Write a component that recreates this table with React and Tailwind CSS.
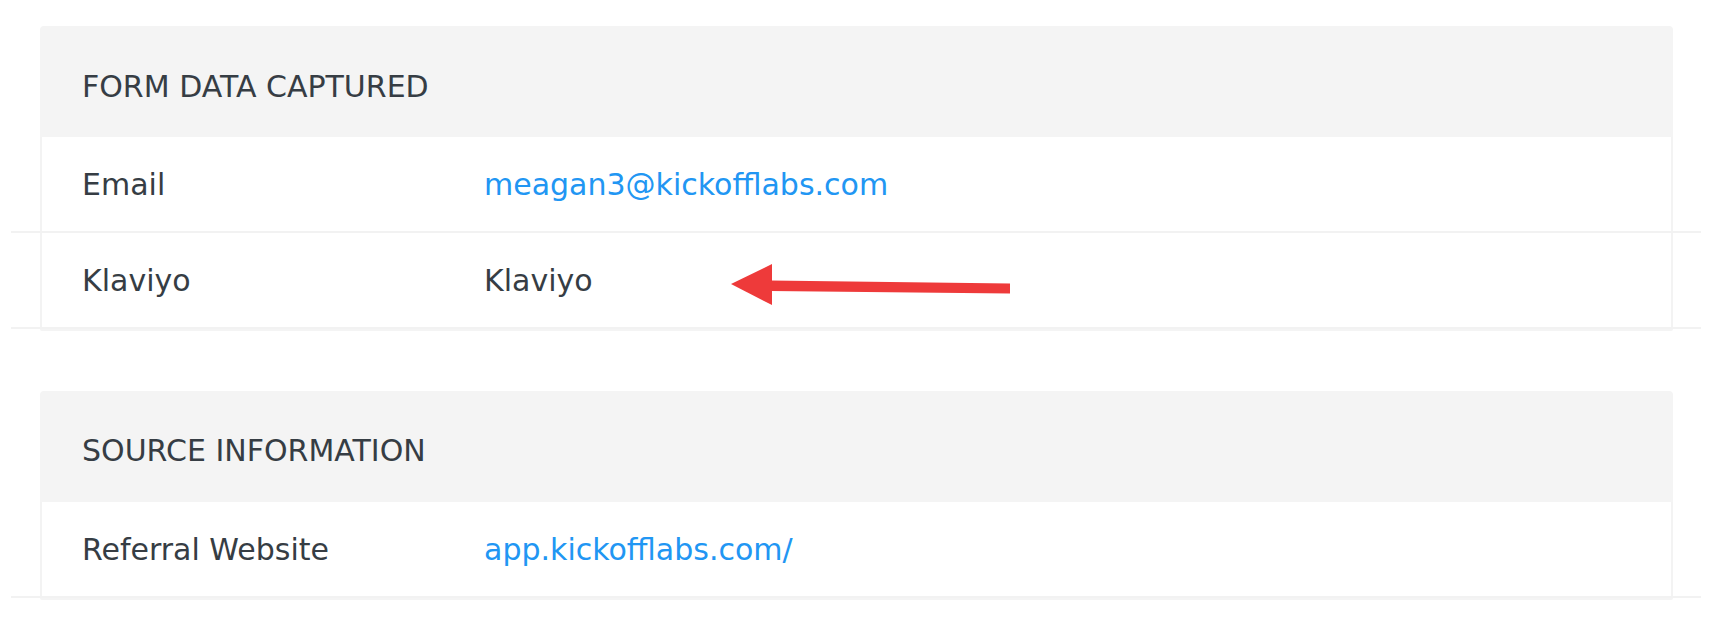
import React from 'react';

const sections = [
  {
    title: 'FORM DATA CAPTURED',
    headerPad: 'pt-[10px]',
    rows: [
      { label: 'Email', value: 'meagan3@kickofflabs.com', link: true },
      { label: 'Klaviyo', value: 'Klaviyo' },
    ],
  },
  {
    title: 'SOURCE INFORMATION',
    headerPad: 'pt-[8px]',
    rows: [{ label: 'Referral Website', value: 'app.kickofflabs.com/', link: true }],
  },
];

function Section({ title, headerPad, rows }) {
  return (
    <div className="ml-[40px] w-[1633px]">
      {/* Header */}
      <div className={`flex h-[111px] items-center rounded-t-[4px] bg-[#f4f4f4] pl-[42px] ${headerPad}`}>
        <span>{title}</span>
      </div>

      {/* Rows */}
      <div className="border-x-2 border-[#f3f3f3]">
        {rows.map((row) => (
          <div key={row.label}>
            <div className="flex h-[94px] items-center pl-[40px]">
              <div className="w-[402px]">{row.label}</div>
              {row.link ? (
                <a href="#" className="text-[#2196f3]">
                  {row.value}
                </a>
              ) : (
                <div>{row.value}</div>
              )}
            </div>
            <div className="-ml-[31px] -mr-[30px] h-[2px] bg-[#f2f2f2]" />
          </div>
        ))}
      </div>
      <div className="h-[2px] rounded-b-[3px] bg-[#f4f4f4]" />
    </div>
  );
}

export default function App() {
  return (
    <div
      className="relative h-[642px] w-[1726px] overflow-hidden bg-white pt-[26px] text-[30px] text-[#363d44]"
      style={{ fontFamily: '"DejaVu Sans", Verdana, sans-serif' }}
    >
      <div className="flex flex-col gap-[60px]">
        {sections.map((s) => (
          <Section key={s.title} {...s} />
        ))}
      </div>

      {/* Red annotation arrow */}
      <svg
        className="pointer-events-none absolute left-0 top-0"
        width="1726"
        height="642"
        viewBox="0 0 1726 642"
      >
        <polygon points="731,284 772,264 772,305" fill="#ee3a3a" />
        <polygon points="770,280.5 1010,283.5 1010,293.5 770,291" fill="#ee3a3a" />
      </svg>
    </div>
  );
}
